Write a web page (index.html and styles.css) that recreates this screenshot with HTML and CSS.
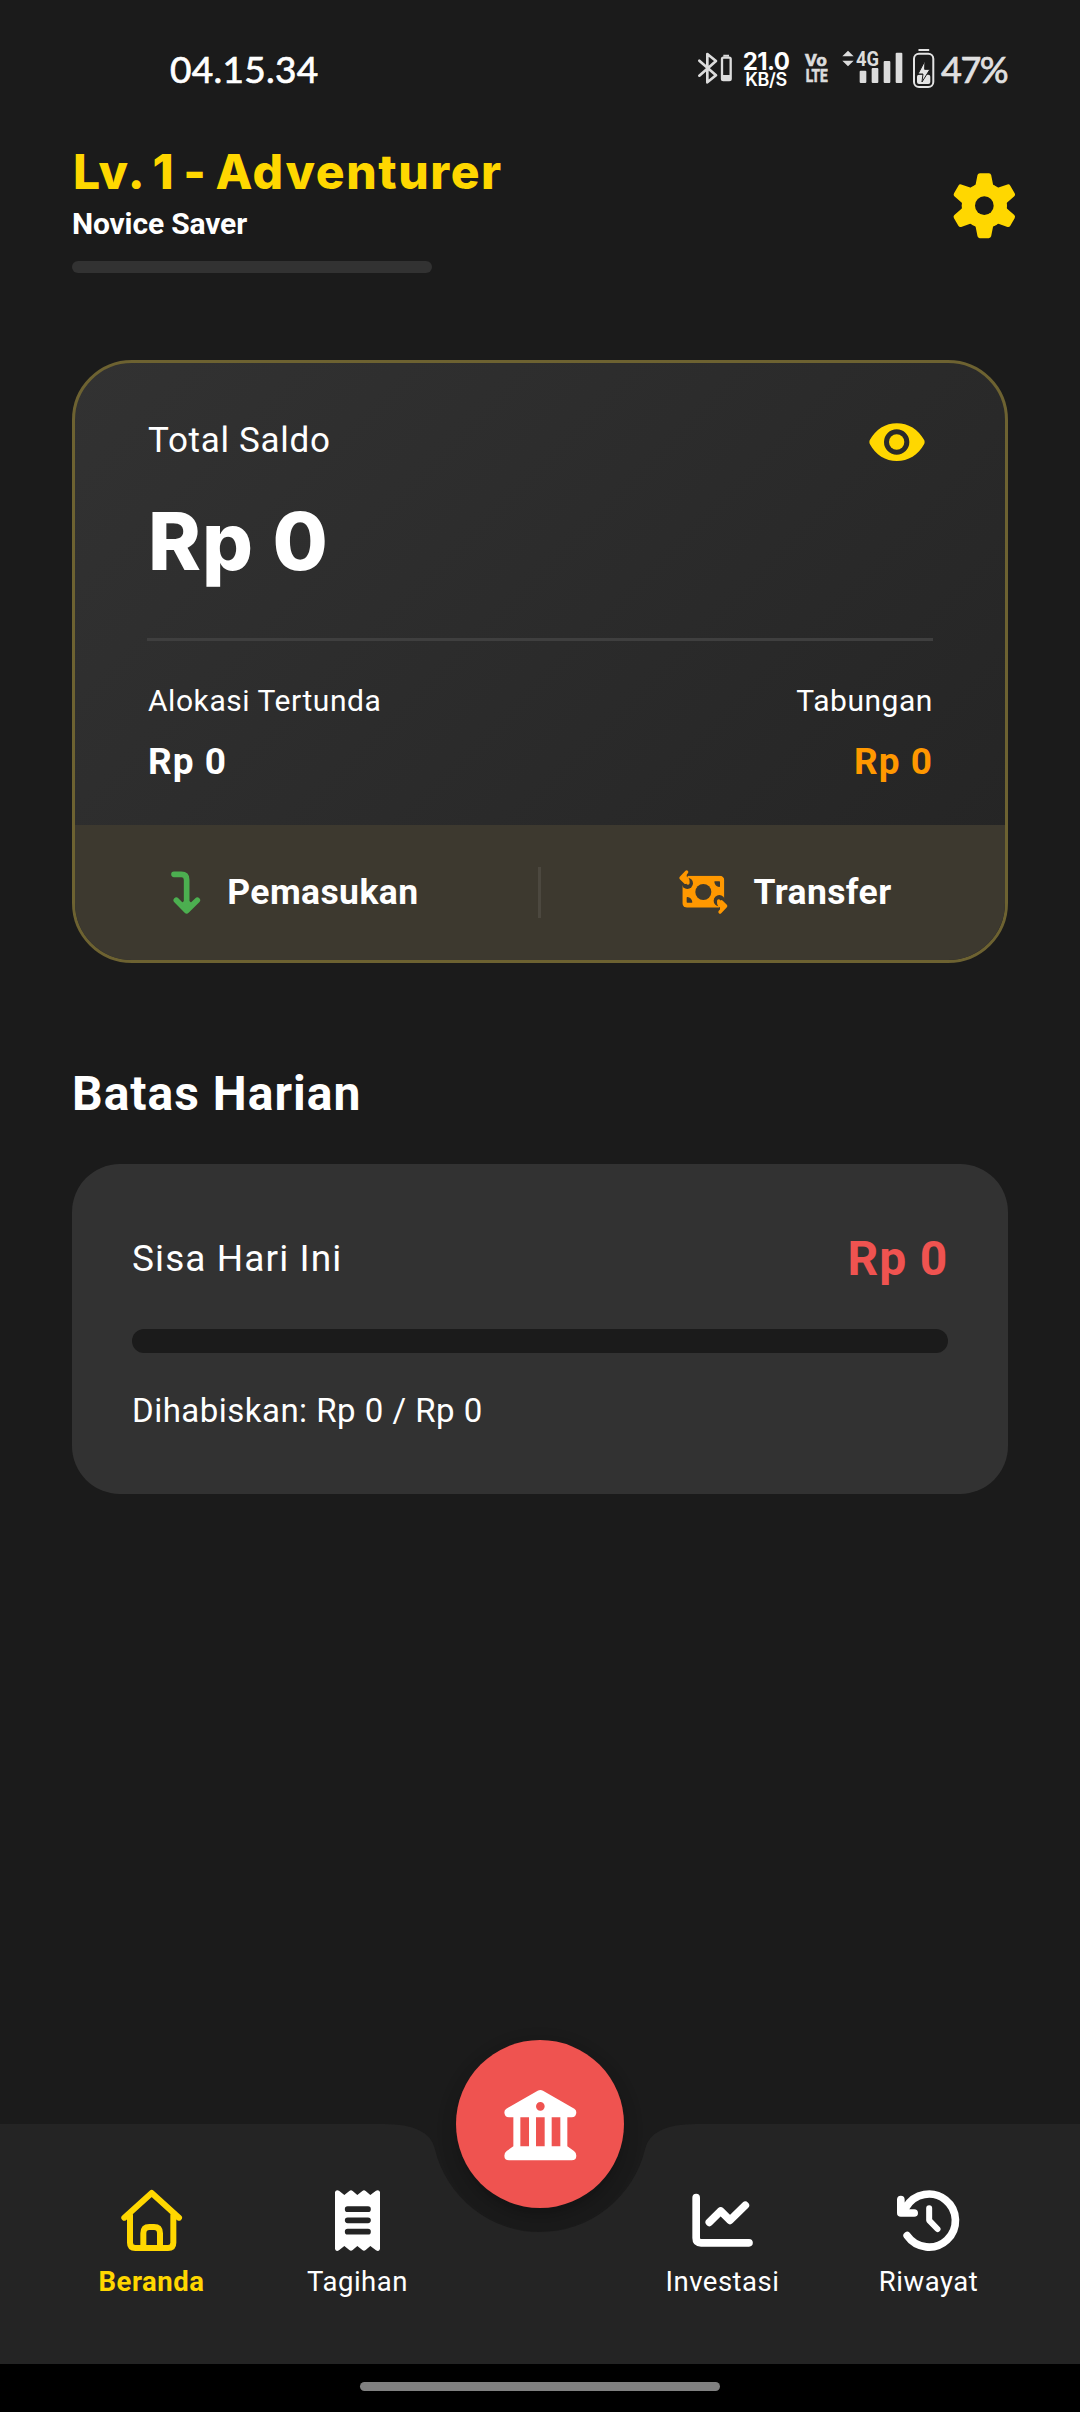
FILE: index.html
```html
<!DOCTYPE html>
<html lang="id">
<head>
<meta charset="utf-8">
<title>Beranda</title>
<link rel="stylesheet" href="styles.css">
</head>
<body>
<div class="screen">
  <div class="status">
    <span class="status-time">04.15.34</span>
    <div class="status-icons">
      <svg class="ic-bluetooth" viewBox="111 60 108 120">
        <path d="M118 95L168 139L142 160V75L168 96L118 140" fill="none" stroke="#dcdcdc" stroke-width="8" stroke-linejoin="round" stroke-linecap="round"/>
        <rect x="186" y="86" width="26" height="67" rx="4" fill="none" stroke="#dcdcdc" stroke-width="7"/>
        <path d="M190 77H207V83H190ZM187 138H210V153H187Z" fill="#dcdcdc"/>
      </svg>
      <div class="speed"><span class="speed-value">21.0</span><span class="speed-unit">KB/S</span></div>
      <svg class="ic-volte" viewBox="435 60 68 120">
        <text x="435" y="111" font-size="51" textLength="65" lengthAdjust="spacingAndGlyphs">Vo</text>
        <text x="437" y="160" font-size="54" textLength="66" lengthAdjust="spacingAndGlyphs">LTE</text>
      </svg>
      <svg class="ic-signal" viewBox="545 60 183 120">
        <g fill="#dcdcdc">
          <path d="M546 82L563 65L580 82ZM546 95H580L563 112Z"/>
          <rect x="598" y="125" width="20" height="37" rx="3"/>
          <rect x="634" y="117" width="20" height="45" rx="3"/>
          <rect x="670" y="96" width="20" height="66" rx="3"/>
          <rect x="706" y="71" width="20" height="91" rx="3"/>
        </g>
        <text x="587" y="111" font-size="60" textLength="69" lengthAdjust="spacingAndGlyphs" class="net">4G</text>
      </svg>
      <svg class="ic-battery" viewBox="758 54 64 123">
        <rect x="761" y="71" width="58" height="100" rx="15" fill="none" stroke="#e4e4e4" stroke-width="6"/>
        <rect x="774" y="57" width="33" height="6" rx="2" fill="#e4e4e4"/>
        <rect x="770" y="134" width="40" height="28" rx="6" fill="#e4e4e4"/>
        <path d="M794 92L773 132H788L785 156L809 118H793Z" fill="#e4e4e4" stroke="#1b1b1b" stroke-width="3"/>
      </svg>
      <span class="status-percent">47%</span>
    </div>
  </div>

  <header class="header">
    <div class="profile">
      <h1 class="level">Lv. 1 - Adventurer</h1>
      <p class="rank">Novice Saver</p>
      <div class="xp"></div>
    </div>
    <svg class="ic-gear" viewBox="341 98 183 197">
      <defs>
        <g id="tooth"><path d="M419 98.500H446Q451 98.500 452.500 104L458 132Q460 141 470 140L432 196L394 140Q404 141 406 132L411.500 104Q413 98.500 419 98.500Z"/></g>
        <mask id="gear-hole"><rect x="330" y="90" width="210" height="210" fill="#fff"/><circle cx="432" cy="196" r="28" fill="#000"/></mask>
      </defs>
      <g fill="#ffd700" mask="url(#gear-hole)">
        <circle cx="432" cy="196" r="68"/>
        <use href="#tooth"/>
        <use href="#tooth" transform="rotate(60 432 196)"/>
        <use href="#tooth" transform="rotate(120 432 196)"/>
        <use href="#tooth" transform="rotate(180 432 196)"/>
        <use href="#tooth" transform="rotate(240 432 196)"/>
        <use href="#tooth" transform="rotate(300 432 196)"/>
      </g>
    </svg>
  </header>

  <main class="content">
    <section class="balance">
      <div class="balance-main">
        <div class="row">
          <span class="balance-label">Total Saldo</span>
          <svg class="ic-eye" viewBox="88 846 168 114">
            <path fill="#ffd700" fill-rule="evenodd" d="M90 898C108 864 138 846.500 171.500 846.500S236 864 254 898Q256 903 254 908C236 942 205 960 171.500 960S108 942 90 908Q88 903 90 898ZM171 865A38 38 0 1 0 171 941A38 38 0 1 0 171 865Z"/>
            <circle cx="171" cy="903" r="23" fill="#ffd700"/>
          </svg>
        </div>
        <div class="balance-total">Rp 0</div>
        <hr class="rule">
        <div class="row sub">
          <div class="left"><div class="sub-label">Alokasi Tertunda</div><div class="sub-value">Rp 0</div></div>
          <div class="right"><div class="sub-label">Tabungan</div><div class="sub-value savings">Rp 0</div></div>
        </div>
      </div>
      <div class="actions">
        <div class="action income">
          <svg class="ic-income" viewBox="335 632 88 129">
            <path d="M344 642H366Q382 642 382 658V742M351 720L382 751L414 720" fill="none" stroke="#4caf50" stroke-width="17" stroke-linecap="round" stroke-linejoin="round"/>
            <path d="M364 730L382 716L400 730L382 751Z" fill="#4caf50"/>
          </svg>
          <span class="action-label">Pemasukan</span>
        </div>
        <div class="action-divider"></div>
        <div class="action transfer">
          <svg class="ic-transfer" viewBox="56 31 147 132">
            <defs>
              <mask id="note">
                <rect x="66" y="48" width="126" height="96" rx="14" fill="#fff"/>
                <circle cx="129" cy="97" r="24"/>
                <g id="note-cut">
                  <circle cx="81" cy="71" r="17"/>
                  <path d="M56 40H82V66H56Z"/>
                  <path d="M164 67H177V80Q166 79 164 67Z" stroke="#000" stroke-width="4" stroke-linejoin="round"/>
                </g>
                <use href="#note-cut" transform="rotate(180 129 97)"/>
              </mask>
            </defs>
            <g fill="none" stroke="#ff9800" stroke-width="10" stroke-linecap="round" stroke-linejoin="round">
              <g id="note-arrow"><path d="M79 36L62 55L79 70Z" stroke="none" fill="#ff9800"/><path d="M79 37L62 55L75 68M64 55H74Q84 56 83 70"/></g>
              <use href="#note-arrow" transform="rotate(180 129 97)"/>
            </g>
            <rect x="66" y="48" width="126" height="96" fill="#ff9800" mask="url(#note)"/>
          </svg>
          <span class="action-label">Transfer</span>
        </div>
      </div>
    </section>

    <h2 class="section-title">Batas Harian</h2>
    <section class="limit">
      <div class="row">
        <span class="limit-label">Sisa Hari Ini</span>
        <span class="limit-value">Rp 0</span>
      </div>
      <div class="limit-track"></div>
      <p class="limit-note">Dihabiskan: Rp 0 / Rp 0</p>
    </section>
  </main>

  <nav class="nav">
    <svg class="nav-bg" viewBox="0 0 1080 240">
      <path d="M0 0H384Q429 0 434.900 24.900A108 108 0 0 0 645.100 24.900Q651 0 696 0H1080V240H0Z" fill="#242424"/>
    </svg>
    <div class="fab">
      <svg class="ic-bank" viewBox="491 269 218 211">
        <path fill="#fff" fill-rule="evenodd" d="M592 271Q600 267 608 271L702 325Q708 329 708 336Q708 351 694 351H681V438L701 452Q708 457 708 466Q708 480 694 480H506Q492 480 492 466Q492 457 499 452L519 438V351H506Q492 351 492 336Q492 329 498 325ZM600 305A13 13 0 1 0 600 331A13 13 0 1 0 600 305ZM540 351V438H566V351ZM587 351V438H613V351ZM634 351V438H660V351Z"/>
      </svg>
    </div>
    <div class="nav-items">
      <a class="nav-item active">
        <svg class="ic-nav" viewBox="182 270 183 183" fill="none" stroke="#ffd700" stroke-width="18" stroke-linecap="round" stroke-linejoin="round">
          <path d="M192 353L274 279L356 353M209 345V428Q209 444 225 444H323Q339 444 339 428V345M249 440V400Q249 381 267 381H281Q299 381 299 400V440"/>
        </svg>
        <span>Beranda</span>
      </a>
      <a class="nav-item">
        <svg class="ic-nav" viewBox="801 270 183 183">
          <path fill="#fff" d="M825 276Q828 268 837 272L853 285L868 273Q873 269 878 273L892 285L907 273Q912 269 917 273L931 285L948 272Q957 268 960 276V447Q957 456 948 451L931 438L917 450Q912 454 907 450L892 438L878 450Q873 454 868 450L853 438L837 451Q828 456 825 447Z"/>
          <path stroke="#242424" stroke-width="17" stroke-linecap="round" d="M863 327.500H924M863 361H924M863 395H924"/>
        </svg>
        <span>Tagihan</span>
      </a>
      <span class="nav-gap"></span>
      <a class="nav-item">
        <svg class="ic-nav" viewBox="156 270 183 183" fill="none" stroke="#fff" stroke-width="23" stroke-linecap="round" stroke-linejoin="round">
          <path d="M168.500 293V414Q168.500 428.500 183 428.500H327M208 367L242 333L270 361L316 316"/>
        </svg>
        <span>Investasi</span>
      </a>
      <a class="nav-item">
        <svg class="ic-nav" viewBox="773.500 270 183 183" fill="none" stroke="#fff" stroke-width="23" stroke-linecap="round" stroke-linejoin="round">
          <path d="M801 407A79.500 79.500 0 1 0 798 321M782 299V339H822"/>
          <path d="M784 318L803 337H784Z" fill="#fff" stroke-width="6"/>
          <path d="M867 325V361L892 387" stroke-width="18"/>
        </svg>
        <span>Riwayat</span>
      </a>
    </div>
  </nav>
  <div class="gesture"><div class="gesture-pill"></div></div>
</div>
</body>
</html>
```
FILE: styles.css
```css
* { box-sizing: border-box; margin: 0; padding: 0; }

body {
  background: #1b1b1b;
  color: #fff;
  font-family: Roboto, sans-serif;
}

svg { display: block; flex: none; overflow: visible; }

.screen {
  width: 1080px;
  height: 2412px;
  display: flex;
  flex-direction: column;
  white-space: nowrap;
}

.row { display: flex; justify-content: space-between; align-items: center; }

/* Status bar */
.status {
  height: 137px;
  padding: 0 72px 0 170px;
  display: flex;
  justify-content: space-between;
  align-items: center;
}
.status-time {
  font: 400 37px/46px Lato, sans-serif;
  letter-spacing: 0.3px;
  -webkit-text-stroke: 0.7px #fff;
}
.status-icons { display: flex; align-items: center; }
.ic-bluetooth { width: 36px; height: 40px; }
.speed {
  width: 46px;
  margin-left: 10px;
  padding-top: 3px;
  display: flex;
  flex-direction: column;
  align-items: center;
  font-family: Inter, sans-serif;
}
.speed-value { font-size: 24px; font-weight: 700; line-height: 19px; letter-spacing: -0.6px; }
.speed-unit { font-size: 18px; font-weight: 600; line-height: 18px; letter-spacing: -0.4px; }
.ic-volte { width: 22.700px; height: 40px; margin-left: 16px; }
.ic-volte text, .ic-signal .net { fill: #dcdcdc; font-family: Roboto, sans-serif; font-weight: 700; }
.ic-volte text { stroke: #dcdcdc; stroke-width: 2px; }
.ic-signal .net { stroke: #1b1b1b; stroke-width: 5px; paint-order: stroke; }
.ic-signal { width: 61px; height: 40px; margin-left: 14px; }
.ic-battery { width: 21.300px; height: 41px; margin: 0 7px 0 10px; }
.status-percent {
  width: 67px;
  font: 400 36px/46px Lato, sans-serif;
  letter-spacing: -1.500px;
  color: #e0e0e0;
  -webkit-text-stroke: 0.7px #e0e0e0;
}

/* Header */
.header {
  display: flex;
  justify-content: space-between;
  align-items: flex-start;
  padding: 5px 65px 0 72px;
}
.level {
  margin-left: 1px;
  font: 800 48px/60px Inter, sans-serif;
  letter-spacing: 1.600px;
  word-spacing: -4px;
  color: #ffd700;
}
.rank { margin-top: 4px; font-size: 30px; font-weight: 700; line-height: 36px; letter-spacing: -0.15px; }
.xp { width: 360px; height: 12px; margin-top: 19px; border-radius: 6px; background: #323232; }
.ic-gear { width: 61px; height: 65.700px; margin-top: 30.500px; }

/* Balance card */
.content { flex: 1; padding: 87px 72px 0; }
.balance {
  height: 603px;
  border: 3px solid #6d6231;
  border-radius: 60px;
  overflow: hidden;
  background: linear-gradient(135deg, #323232, #242424);
}
.balance-main { height: 462px; padding: 55px 72px 0; }
.balance-label { padding: 1px 0 0 1px; font-size: 35px; line-height: 44px; letter-spacing: 0.7px; }
.ic-eye { width: 56px; height: 38px; margin: 2px 8px 0 0; }
.balance-total {
  margin: 30px 0 0 1px;
  font: 800 80px/96px Inter, sans-serif;
  letter-spacing: 1px;
}
.rule { height: 3px; margin-top: 49px; border: 0; background: #3f3f3f; }
.sub { margin-top: 42px; }
.left { padding-left: 1px; }
.sub-label { font-size: 30px; line-height: 36px; letter-spacing: 0.55px; }
.sub-value { margin-top: 21px; font-size: 37px; font-weight: 700; line-height: 44px; letter-spacing: 1px; }
.savings { color: #ff9800; }
.right { text-align: right; }
.actions {
  height: 135px;
  display: grid;
  grid-template-columns: 1fr 3px 1fr;
  align-items: center;
  background: #3d392f;
}
.action { display: flex; align-items: center; }
.income { padding-left: 96px; gap: 27px; }
.transfer { padding-left: 137px; gap: 26px; }
.action-label { margin-top: -2px; font-size: 35.500px; font-weight: 700; line-height: 44px; letter-spacing: 0.4px; }
.action-divider { height: 51px; margin-left: -1px; width: 3px; background: #4c483f; }
.ic-income { width: 29.300px; height: 43px; margin-top: -1px; }
.ic-transfer { width: 49px; height: 44px; margin-top: -1px; }

/* Daily limit */
.section-title { margin-top: 101px; font-size: 48px; font-weight: 700; line-height: 60px; letter-spacing: 1px; }
.limit {
  height: 330px;
  margin-top: 40px;
  padding: 65px 60px 0;
  border-radius: 48px;
  background: #323232;
}
.limit-label { font-size: 37px; line-height: 44px; letter-spacing: 1.100px; }
.limit-value { font-size: 48px; font-weight: 700; line-height: 60px; letter-spacing: 0.8px; color: #ef5350; }
.limit-track { height: 24px; margin-top: 40px; border-radius: 12px; background: #1b1b1b; }
.limit-note { margin-top: 38px; font-size: 33px; line-height: 40px; letter-spacing: 0.48px; }

/* Bottom navigation */
.nav { position: relative; height: 240px; }
.nav-bg { position: absolute; inset: 0; width: 1080px; height: 240px; }
.fab {
  position: absolute;
  left: 456px;
  top: -84px;
  width: 168px;
  height: 168px;
  border-radius: 50%;
  display: flex;
  align-items: center;
  justify-content: center;
  background: #ef5350;
  box-shadow: 0 9px 15px rgba(0, 0, 0, 0.2), 0 6px 24px rgba(0, 0, 0, 0.08);
}
.ic-bank { width: 72.700px; height: 70.300px; margin-top: 2px; }
.nav-items {
  position: relative;
  display: grid;
  grid-template-columns: 206px 206px 159px 206px 206px;
  justify-content: center;
  padding-top: 66px;
}
.nav-item {
  display: flex;
  flex-direction: column;
  align-items: center;
  gap: 14px;
  font-size: 27.500px;
  line-height: 34px;
  letter-spacing: 0.5px;
}
.nav-item.active { color: #ffd700; font-weight: 700; }
.ic-nav { width: 61px; height: 61px; }

/* System gesture bar */
.gesture { height: 48px; padding-top: 18px; background: #000; }
.gesture-pill { width: 360px; height: 9px; margin: 0 auto; border-radius: 5px; background: #808080; }
```
